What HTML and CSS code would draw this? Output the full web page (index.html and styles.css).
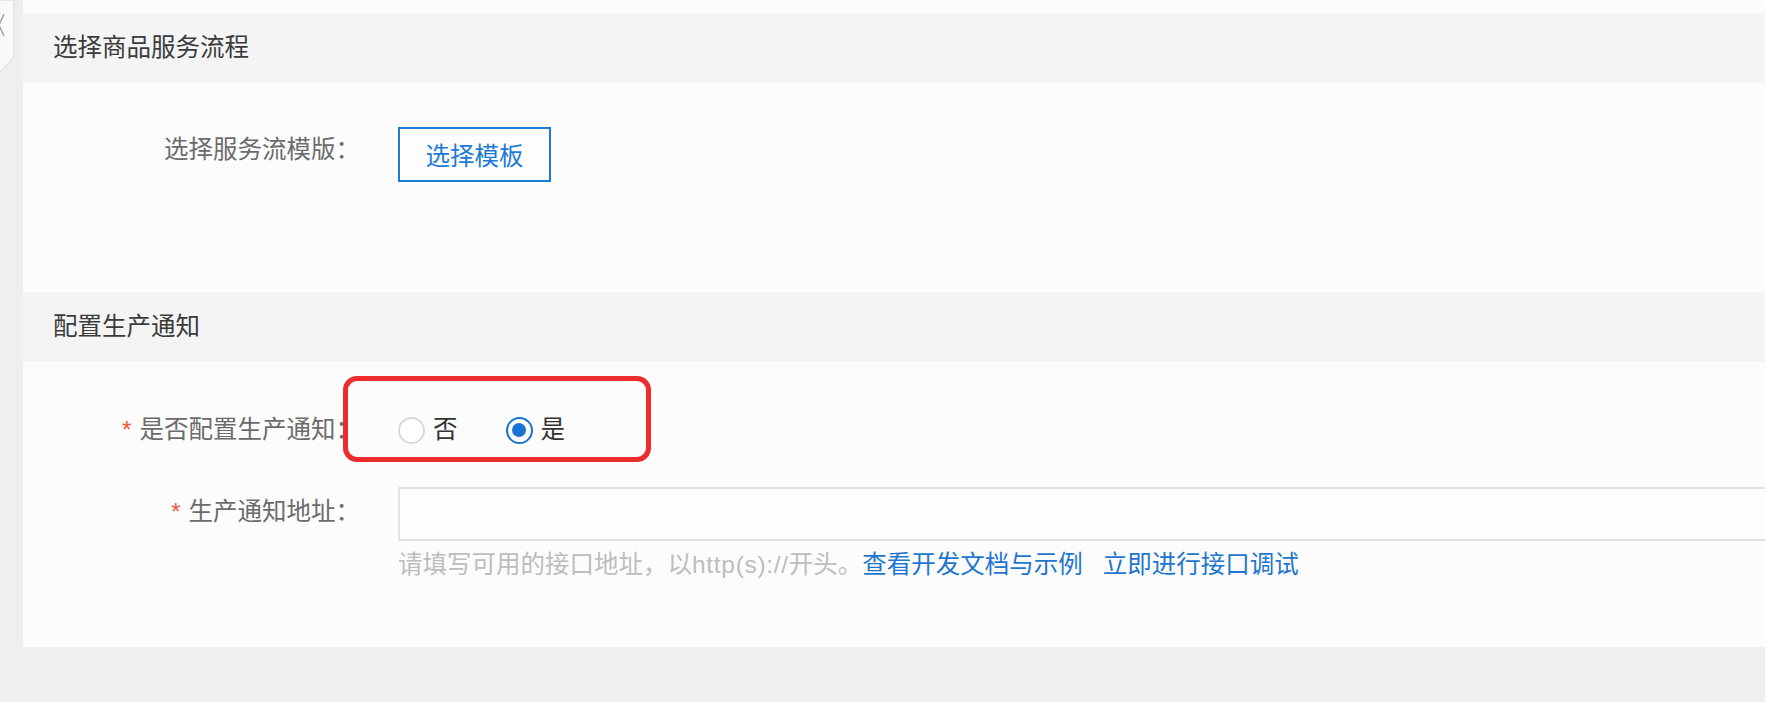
FILE: index.html
```html
<!DOCTYPE html>
<html lang="zh-CN">
<head>
<meta charset="utf-8">
<title>配置</title>
<link rel="stylesheet" href="styles.css">
</head>
<body>
<div class="page">
  <aside class="side">
    <svg class="collapse-tab" width="16" height="76" viewBox="0 0 16 76">
      <path d="M-1 0 H14 V57 L-1 73" fill="#f9f9f9" stroke="#d8d8d8" stroke-width="1"/>
      <polyline points="4,14 -1,25 4,36" fill="none" stroke="#a3a3a3" stroke-width="1.5"/>
    </svg>
  </aside>
  <main class="panel">
    <div class="prev-tail"></div>
    <section class="section">
      <h2 class="section-title">选择商品服务流程</h2>
      <div class="section-body body-flow">
        <div class="form-item item-template">
          <span class="form-label">选择服务流模版：</span>
          <div class="form-control">
            <button class="btn-outline" type="button">选择模板</button>
          </div>
        </div>
      </div>
    </section>
    <section class="section">
      <h2 class="section-title">配置生产通知</h2>
      <div class="section-body body-notify">
        <div class="form-item item-radio">
          <span class="form-label"><span class="req">*</span>是否配置生产通知：</span>
          <div class="form-control radio-group">
            <span class="radio"><span class="radio-dot"></span>否</span>
            <span class="radio checked"><span class="radio-dot"></span>是</span>
          </div>
          <div class="highlight"></div>
        </div>
        <div class="form-item item-url">
          <span class="form-label"><span class="req">*</span>生产通知地址：</span>
          <div class="form-control">
            <input class="text-input" type="text">
            <p class="help">请填写可用的接口地址，以<span class="latin">http(s)://</span>开头。<a href="#">查看开发文档与示例</a><a href="#">立即进行接口调试</a></p>
          </div>
        </div>
      </div>
    </section>
  </main>
</div>
</body>
</html>
```

FILE: styles.css
```css
* { box-sizing: border-box; }
html, body { margin: 0; padding: 0; }
body {
  background: #efefef;
  font-family: "Liberation Sans", "Noto Sans CJK SC", sans-serif;
  font-size: 24.5px;
  color: #333;
  overflow: hidden;
}
.page {
  display: flex;
  align-items: flex-start;
  height: 702px;
}
.side {
  width: 23px;
  flex: none;
  align-self: stretch;
  position: relative;
  background: #efefef;
}
.collapse-tab {
  position: absolute;
  left: 0;
  top: 0;
  overflow: visible;
}
.panel {
  flex: 1;
  min-width: 0;
  overflow: hidden;
  background: #fcfcfc;
}
.prev-tail { height: 13px; }
.section-title {
  margin: 0;
  height: 70px;
  line-height: 70px;
  padding-left: 30px;
  background: #f4f4f4;
  font-size: 24.5px;
  font-weight: normal;
  color: #3b3b3b;
}
.section-body {
  display: flex;
  flex-direction: column;
}
.body-flow { padding: 44px 0 110px; }
.body-notify { padding: 48px 0 64px; gap: 37px; }
.form-item {
  display: grid;
  grid-template-columns: 337px 1fr;
  column-gap: 38px;
  align-items: start;
  position: relative;
}
.form-label {
  text-align: right;
  color: #6b6b6b;
  white-space: nowrap;
}
.item-template .form-label { line-height: 46px; }
.item-radio .form-label { line-height: 40px; }
.item-url .form-label { line-height: 50px; }
.req {
  color: #f15a3b;
  margin-right: 8px;
}
.form-control { min-width: 0; }
.btn-outline {
  display: block;
  width: 153px;
  height: 55px;
  padding: 0;
  border: 2px solid #1c7bd6;
  background: #fdfdfd;
  color: #1c7bd6;
  font-family: inherit;
  font-size: 24.5px;
  text-align: center;
}
.radio-group {
  display: flex;
  align-items: center;
  gap: 48px;
  height: 40px;
}
.radio {
  display: flex;
  align-items: center;
  gap: 8px;
  color: #333;
  line-height: 40px;
}
.radio-dot {
  flex: none;
  width: 27px;
  height: 27px;
  border: 2px solid #d9d9d9;
  border-radius: 50%;
  background: #fff;
  position: relative;
}
.radio.checked .radio-dot { border-color: #1a73d0; }
.radio.checked .radio-dot::after {
  content: "";
  position: absolute;
  inset: 4.5px;
  border-radius: 50%;
  background: #1a73d0;
}
.highlight {
  position: absolute;
  left: 320px;
  top: -34px;
  width: 308px;
  height: 86px;
  border: 5px solid #ee2c2c;
  border-radius: 14px;
  pointer-events: none;
}
.text-input {
  display: block;
  width: 1500px;
  height: 54px;
  margin: 0;
  border: 2px solid #e3e3e3;
  background: #fdfdfd;
  font: inherit;
}
.help {
  margin: 6px 0 0;
  line-height: 36px;
  color: #bdbdbd;
  white-space: nowrap;
}
.help .latin { letter-spacing: 0.7px; }
.help a {
  color: #1f76cf;
  text-decoration: none;
}
.help a + a { margin-left: 20px; }
```
